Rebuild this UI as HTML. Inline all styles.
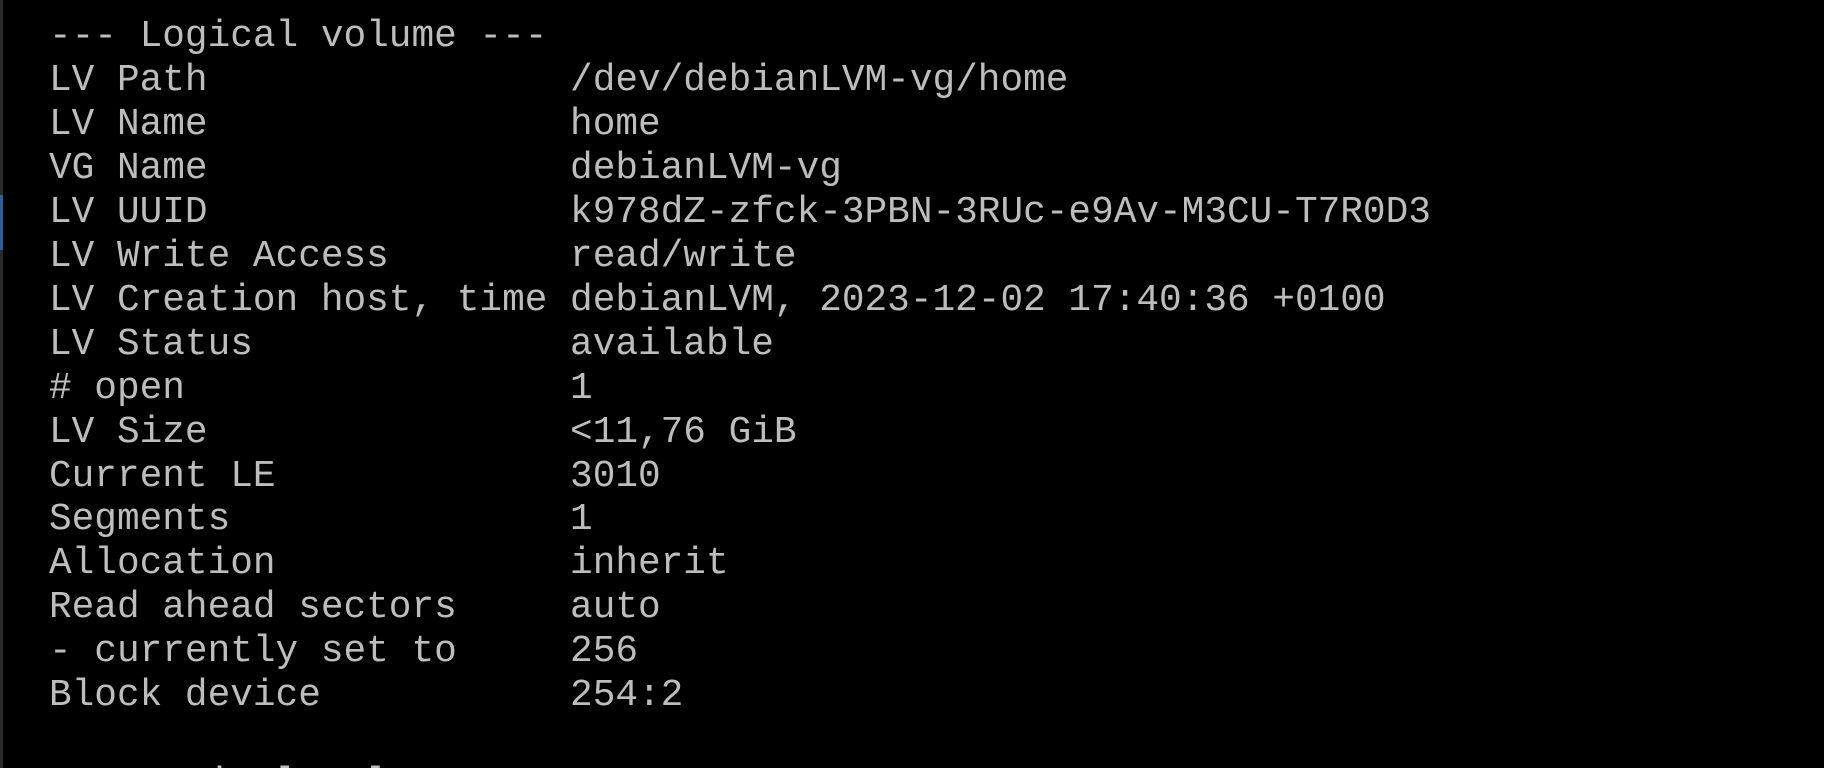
<!DOCTYPE html>
<html><head><meta charset="utf-8"><style>
html,body{margin:0;padding:0;background:#000;width:1824px;height:768px;overflow:hidden;position:relative}
pre{position:absolute;left:49px;top:16px;margin:0;height:752px;overflow:hidden;font-family:"Liberation Mono","DejaVu Sans Mono",monospace;font-size:37.75px;line-height:43.95px;color:#bdbdbd;white-space:pre}
.edge{position:absolute;left:0;top:0;width:3px;height:768px;background:#2a2a2a}
.blue{position:absolute;left:0;top:195px;width:3px;height:55px;background:#2f5f9a}
</style></head><body>
<div class="edge"></div><div class="blue"></div>
<pre>--- Logical volume ---
LV Path                /dev/debianLVM-vg/home
LV Name                home
VG Name                debianLVM-vg
LV UUID                k978dZ-zfck-3PBN-3RUc-e9Av-M3CU-T7R0D3
LV Write Access        read/write
LV Creation host, time debianLVM, 2023-12-02 17:40:36 +0100
LV Status              available
# open                 1
LV Size                &lt;11,76 GiB
Current LE             3010
Segments               1
Allocation             inherit
Read ahead sectors     auto
- currently set to     256
Block device           254:2

--- Logical volume ---</pre>
</body></html>
